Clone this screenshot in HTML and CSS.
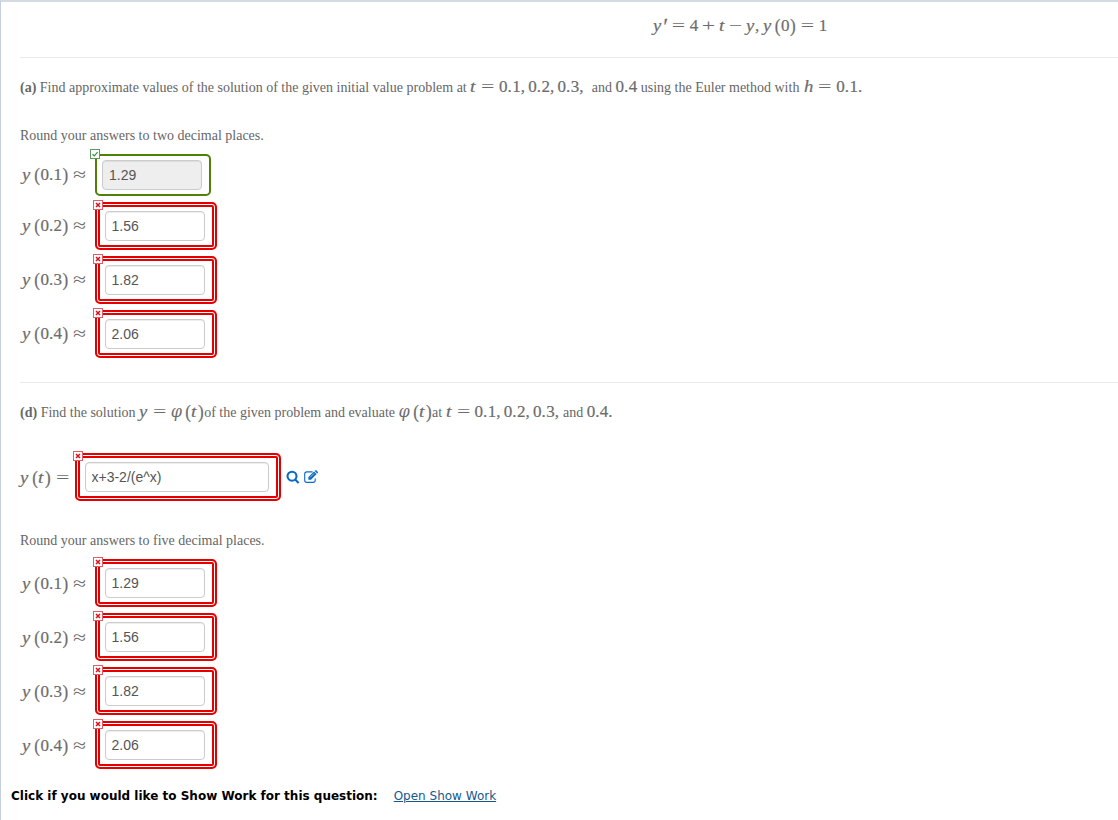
FILE: index.html
```
<!DOCTYPE html>
<html lang="en">
<head>
    <meta charset="UTF-8">
    <meta name="viewport" content="width=device-width, initial-scale=1.0">
    <title>Question</title>
    <link rel="stylesheet" href="styles.css">
</head>
<body>
    <div id="question">
        <div class="equation">
            <span class="math"><i class="y">y</i><i class="prime">′</i><b class="rel">=</b>4<b class="op">+</b><i class="t">t</i><b class="op">−</b><i class="y">y</i><b class="comma">,</b><i class="y">y</i><b class="paren open">(</b>0<b class="paren">)</b><b class="rel">=</b>1</span>
        </div>

        <!-- part a -->
        <p class="text part-a"><span><strong>(a)</strong> Find approximate values of the solution of the given initial value problem at</span><span class="math"><i class="t">t</i><b class="rel">=</b>0<b class="dot">.</b>1<b class="comma">,</b>0<b class="dot">.</b>2<b class="comma">,</b>0<b class="dot">.</b>3<b class="comma">,</b></span><span class="and">and</span><span class="math">0<b class="dot">.</b>4</span><span>using the Euler method with</span><span class="math"><i class="h">h</i><b class="rel">=</b>0<b class="dot">.</b>1<b class="dot">.</b></span></p>
        <p class="text round-a">Round your answers to two decimal places.</p>
        <div class="answers">
            <div class="row">
                <span class="math"><i class="y">y</i><b class="paren open">(</b>0<b class="dot">.</b>1<b class="paren">)</b><b class="rel approx">≈</b></span>
                <div class="box right">
                    <svg class="badge" viewBox="0 0 10 10"><rect x=".5" y=".5" width="9" height="9"/><path d="M2.5 5.2l1.8 1.6L7.6 3.2"/></svg>
                    <input type="text" value="1.29" readonly>
                </div>
            </div>
            <div class="row">
                <span class="math"><i class="y">y</i><b class="paren open">(</b>0<b class="dot">.</b>2<b class="paren">)</b><b class="rel approx">≈</b></span>
                <div class="box wrong">
                    <svg class="badge" viewBox="0 0 10 10"><rect x=".5" y=".5" width="9" height="9"/><path d="M3 3l4 4M7 3l-4 4"/></svg>
                    <input type="text" value="1.56">
                </div>
            </div>
            <div class="row">
                <span class="math"><i class="y">y</i><b class="paren open">(</b>0<b class="dot">.</b>3<b class="paren">)</b><b class="rel approx">≈</b></span>
                <div class="box wrong">
                    <svg class="badge" viewBox="0 0 10 10"><rect x=".5" y=".5" width="9" height="9"/><path d="M3 3l4 4M7 3l-4 4"/></svg>
                    <input type="text" value="1.82">
                </div>
            </div>
            <div class="row">
                <span class="math"><i class="y">y</i><b class="paren open">(</b>0<b class="dot">.</b>4<b class="paren">)</b><b class="rel approx">≈</b></span>
                <div class="box wrong">
                    <svg class="badge" viewBox="0 0 10 10"><rect x=".5" y=".5" width="9" height="9"/><path d="M3 3l4 4M7 3l-4 4"/></svg>
                    <input type="text" value="2.06">
                </div>
            </div>
        </div>

        <!-- part d -->
        <p class="text part-d"><span><strong>(d)</strong> Find the solution</span><span class="math"><i class="y">y</i><b class="rel">=</b><i class="phi">φ</i><b class="paren open">(</b><i class="t">t</i><b class="paren">)</b></span><span class="tight">of the given problem and evaluate</span><span class="math"><i class="phi">φ</i><b class="paren open">(</b><i class="t">t</i><b class="paren">)</b></span><span class="tight">at</span><span class="math"><i class="t">t</i><b class="rel">=</b>0<b class="dot">.</b>1<b class="comma">,</b>0<b class="dot">.</b>2<b class="comma">,</b>0<b class="dot">.</b>3<b class="dot">,</b></span><span>and</span><span class="math">0<b class="dot">.</b>4<b class="dot">.</b></span></p>
        <div class="row solution">
            <span class="math"><i class="y">y</i><b class="paren open">(</b><i class="t">t</i><b class="paren">)</b><b class="rel">=</b></span>
            <div class="box wrong wide">
                <svg class="badge" viewBox="0 0 10 10"><rect x=".5" y=".5" width="9" height="9"/><path d="M3 3l4 4M7 3l-4 4"/></svg>
                <input type="text" value="x+3-2/(e^x)">
            </div>
            <svg class="icon search" viewBox="0 0 14 14"><circle cx="6" cy="6.2" r="4.5"/><path d="M9.2 9.6l3.4 3.5"/></svg>
            <svg class="icon edit" viewBox="0 0 14 14"><path class="page" d="M8.6 1.9H2.8Q.7 1.9 .7 4v6.3Q.7 12.4 2.8 12.4h6.3Q11.2 12.4 11.2 10.3V8.6"/><path class="pen" d="M4.4 9.8V7L10 1.6l2.6 2.5L7 9.8z"/><path class="tip" d="M10.7 1l.8-.7q.4-.3.8 0l1.6 1.6q.3.4 0 .8l-.7.7z"/><path class="gap" d="M6.2 7.3l4-4"/></svg>
        </div>
        <p class="text round-d">Round your answers to five decimal places.</p>
        <div class="answers low">
            <div class="row">
                <span class="math"><i class="y">y</i><b class="paren open">(</b>0<b class="dot">.</b>1<b class="paren">)</b><b class="rel approx">≈</b></span>
                <div class="box wrong">
                    <svg class="badge" viewBox="0 0 10 10"><rect x=".5" y=".5" width="9" height="9"/><path d="M3 3l4 4M7 3l-4 4"/></svg>
                    <input type="text" value="1.29">
                </div>
            </div>
            <div class="row">
                <span class="math"><i class="y">y</i><b class="paren open">(</b>0<b class="dot">.</b>2<b class="paren">)</b><b class="rel approx">≈</b></span>
                <div class="box wrong">
                    <svg class="badge" viewBox="0 0 10 10"><rect x=".5" y=".5" width="9" height="9"/><path d="M3 3l4 4M7 3l-4 4"/></svg>
                    <input type="text" value="1.56">
                </div>
            </div>
            <div class="row">
                <span class="math"><i class="y">y</i><b class="paren open">(</b>0<b class="dot">.</b>3<b class="paren">)</b><b class="rel approx">≈</b></span>
                <div class="box wrong">
                    <svg class="badge" viewBox="0 0 10 10"><rect x=".5" y=".5" width="9" height="9"/><path d="M3 3l4 4M7 3l-4 4"/></svg>
                    <input type="text" value="1.82">
                </div>
            </div>
            <div class="row">
                <span class="math"><i class="y">y</i><b class="paren open">(</b>0<b class="dot">.</b>4<b class="paren">)</b><b class="rel approx">≈</b></span>
                <div class="box wrong">
                    <svg class="badge" viewBox="0 0 10 10"><rect x=".5" y=".5" width="9" height="9"/><path d="M3 3l4 4M7 3l-4 4"/></svg>
                    <input type="text" value="2.06">
                </div>
            </div>
        </div>

        <div class="show-work">
            <strong>Click if you would like to Show Work for this question:</strong>
            <a href="#">Open Show Work</a>
        </div>
    </div>
</body>
</html>
```
FILE: styles.css
```
*{
    margin: 0;
    padding: 0;
    box-sizing: border-box;
}
body{
    background-color: #fff;
    color: #666;
    font-family: "Liberation Serif", serif;
    font-size: 14px;
}
#question{
    height: 820px;
    border-top: 2px solid #d3dae2;
    border-left: 1px solid #c5cfe0;
    overflow: hidden;
}

/* equation at the top */
.equation{
    height: 56px;
    margin-left: 19px;
    padding: 14px 0 0 633px;
    border-bottom: 1px solid #eaeaea;
}
.equation .math{
    letter-spacing: 0.2px;
}

/* math, widths in em */
.math{
    display: inline-flex;
    color: #6c6c6c;
    font-size: 17px;
    line-height: 20px;
    white-space: pre;
    -webkit-text-stroke: 0.2px #6c6c6c;
}
.math b{
    font-weight: normal;
}
.math .y{
    width: 0.526em;
    transform: scaleX(1.1);
    transform-origin: left;
}
.math .t{
    width: 0.361em;
    transform: scaleX(1.15);
    transform-origin: left;
}
.math .h{
    width: 0.576em;
    transform: scaleX(1.1);
    transform-origin: left;
}
.math .phi{
    width: 0.71em;
    font-family: "DejaVu Serif", serif;
    font-size: 16px;
    -webkit-text-stroke: 0;
}
.math .prime{
    width: 0.3em;
    transform: scale(1.3);
    transform-origin: left 30%;
}
.math .dot{
    width: 0.278em;
}
.math .comma{
    width: 0.278em;
    margin-right: 0.167em;
}
.math .paren{
    width: 0.389em;
    text-align: center;
    transform: scaleY(1.12);
}
.math .open{
    margin-left: 0.167em;
}
.rel, .op{
    display: flex;
    justify-content: center;
    width: 0.778em;
    margin: 0 0.278em;
    transform: scaleX(1.4);
    -webkit-text-stroke: 0;
}
.rel.approx, .solution .rel{
    margin-right: 0;
}
.op{
    margin: 0 0.222em;
}

/* paragraphs */
.text{
    display: flex;
    align-items: baseline;
    height: 20px;
    margin-left: 19px;
    line-height: 20px;
    white-space: pre;
}
.text .math{
    margin: 0 3.5px;
}
.text .tight{
    margin-left: -3.5px;
}
.part-a{
    margin-top: 19px;
}
.part-a .and{
    margin-left: 1.5px;
}
.part-a .math:last-child{
    margin-left: 4.5px;
}
.round-a{
    margin-top: 29px;
}

/* answers */
.answers{
    display: flex;
    flex-direction: column;
    gap: 6px;
    margin-left: 21px;
}
.round-a + .answers{
    margin-top: 8px;
}
.row{
    display: flex;
    align-items: center;
}
.row .math{
    width: 73px;
}
.low .math, .solution .math{
    padding-top: 2px;
}
.box{
    position: relative;
    padding: 4px 7px 4px 5px;
    border-radius: 5px;
}
.right{
    border: 2px solid #508106;
}
/* double red frame: border plus two inset rings */
.wrong{
    padding: 7px 10px 7px 8px;
    border: 2px solid #e40000;
    box-shadow: inset 0 0 0 1px #fff, inset 0 0 0 3px #e40000;
}
.box input{
    display: block;
    width: 100px;
    height: 30px;
    padding: 0 6px 0 5.5px;
    border: 1px solid #ccc;
    border-radius: 4px;
    background-color: #fff;
    box-shadow: inset 0 1px 1px rgba(0, 0, 0, 0.075);
    color: #555;
    font-family: "Liberation Sans", sans-serif;
    font-size: 14px;
}
.right input{
    padding-left: 6px;
    background-color: #eee;
}
.wide input{
    width: 184px;
}
.badge{
    position: absolute;
    left: -4px;
    top: -4px;
    width: 10px;
    height: 10px;
    fill: #fff;
    stroke: #ea5a62;
}
.badge path{
    stroke: #d8101c;
    stroke-width: 1.5;
    fill: none;
}
.right .badge{
    left: -7px;
    top: -7px;
    stroke: #5e9a5e;
}
.right .badge path{
    stroke: #2c9c3c;
    stroke-width: 1.2;
}

/* part d */
.part-d{
    height: 40px;
    margin-top: 24px;
    padding-top: 19px;
    border-top: 1px solid #eaeaea;
}
.solution{
    margin: 31px 0 0 19px;
}
.solution .math{
    width: 55px;
}
.icon{
    width: 14px;
    height: 14px;
    fill: none;
    stroke: #0b69c7;
}
.search{
    margin-left: 5px;
    stroke-width: 2.1;
}
.edit{
    margin-left: 4px;
    stroke-width: 1.1;
}
.edit .pen, .edit .tip{
    fill: #0b69c7;
    stroke: none;
}
.edit .gap{
    stroke: #fff;
    stroke-width: 0.6;
}
.round-d{
    margin-top: 30px;
}
.round-d + .answers{
    margin-top: 8px;
}

/* show work */
.show-work{
    display: flex;
    gap: 16px;
    margin: 19px 0 0 10px;
    font-family: "DejaVu Sans", sans-serif;
    font-size: 12px;
    line-height: 16px;
    color: #000;
    white-space: nowrap;
}
.show-work a{
    color: #17588c;
}
```
